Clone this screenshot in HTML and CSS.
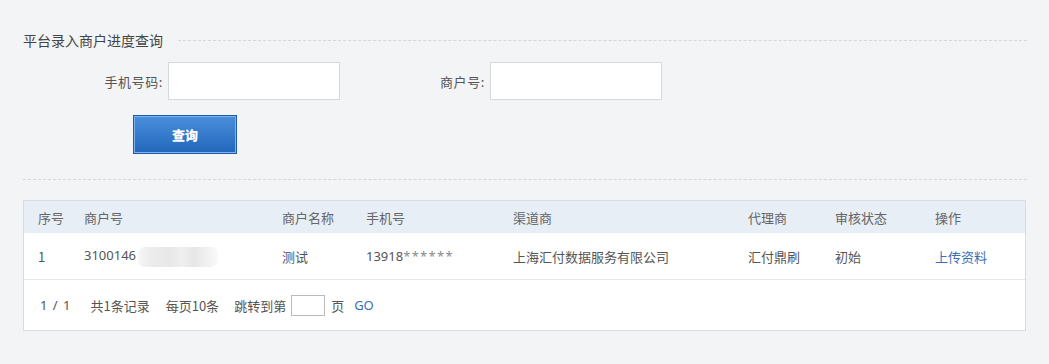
FILE: index.html
```html
<!DOCTYPE html>
<html>
<head>
<meta charset="utf-8">
<link rel="stylesheet" href="styles.css">
</head>
<body>
<div class="page">
  <div class="legend">
    <span class="legend-title">平台录入商户进度查询</span>
    <span class="legend-line"></span>
  </div>
  <div class="form-row">
    <label class="lbl lbl-1">手机号码:</label>
    <input class="field" type="text">
    <label class="lbl lbl-2">商户号:</label>
    <input class="field" type="text">
  </div>
  <div class="btn-row">
    <button class="btn">查询</button>
  </div>
  <div class="divider"></div>
  <div class="grid">
    <table class="tbl">
      <colgroup>
        <col style="width:46px"><col style="width:198px"><col style="width:84px"><col style="width:147px"><col style="width:235px"><col style="width:87px"><col style="width:100px"><col style="width:104px">
      </colgroup>
      <thead>
        <tr><th>序号</th><th>商户号</th><th>商户名称</th><th>手机号</th><th>渠道商</th><th>代理商</th><th>审核状态</th><th>操作</th></tr>
      </thead>
      <tbody>
        <tr>
          <td>1</td>
          <td><span class="num">3100146</span><span class="blur"></span></td>
          <td>测试</td>
          <td class="num">13918<span class="stars">******</span></td>
          <td>上海汇付数据服务有限公司</td>
          <td>汇付鼎刷</td>
          <td>初始</td>
          <td><a class="link">上传资料</a></td>
        </tr>
      </tbody>
    </table>
    <div class="pager">
      <span class="p1">1 / 1</span>
      <span class="p2">共1条记录</span>
      <span class="p3">每页10条</span>
      <span class="p4">跳转到第</span>
      <input class="jump" type="text">
      <span class="p5">页</span>
      <a class="go">GO</a>
    </div>
  </div>
</div>
</body>
</html>
```
FILE: styles.css
```css
html, body {
  margin: 0;
  padding: 0;
  background: #f3f4f6;
}
body {
  font-family: "Noto Sans CJK SC", "Liberation Sans", sans-serif;
  font-size: 13px;
  color: #555;
}
.page {
  padding: 31px 22px 0 23px;
  width: 1004px;
}
.legend {
  display: flex;
  align-items: center;
  height: 18px;
}
.legend-title {
  color: #444;
  font-size: 14px;
  line-height: 18px;
  padding-right: 15px;
}
.legend-line {
  flex: 1;
  border-top: 1px dashed #d3d6db;
}
.form-row {
  display: flex;
  align-items: center;
  margin-top: 13px;
}
.lbl {
  text-align: right;
  padding-right: 5px;
  color: #555;
  letter-spacing: 0.6px;
}
.lbl-1 { width: 140px; }
.lbl-2 { width: 145px; }
.field {
  box-sizing: border-box;
  width: 172px;
  height: 38px;
  border: 1px solid #d6d8db;
  background: #fff;
  margin: 0;
  outline: none;
}
.btn-row {
  padding-left: 110px;
  margin-top: 15px;
}
.btn {
  box-sizing: border-box;
  width: 104px;
  height: 39px;
  border: 1px solid #1f5aa6;
  box-shadow: inset 0 0 0 1px #7fb2ec;
  background: linear-gradient(#4a8fdc, #2266bb);
  color: #fff;
  font-family: "Noto Sans CJK SC", sans-serif;
  font-size: 13px;
  font-weight: 900;
  padding: 0;
  margin: 0;
}
.divider {
  margin-top: 25px;
  border-top: 1px dashed #d3d6db;
}
.grid {
  margin-top: 20px;
  width: 1003px;
  box-sizing: border-box;
  border: 1px solid #d9dcdf;
  background: #fff;
}
.tbl {
  width: 1001px;
  table-layout: fixed;
  border-collapse: collapse;
}
.tbl th {
  background: #e8eef6;
  font-weight: normal;
  text-align: left;
  color: #666;
  height: 32px;
  padding: 0 0 0 14px;
}
.tbl td {
  height: 46px;
  padding: 0 0 0 14px;
  border-bottom: 1px solid #e6e8eb;
  color: #555;
  white-space: nowrap;
}
.num {
  font-family: "Noto Sans", "Liberation Sans", sans-serif;
}
.stars {
  color: #8a8a8a;
  letter-spacing: 1.3px;
}
.blur {
  display: inline-block;
  vertical-align: middle;
  width: 80px;
  height: 20px;
  background: linear-gradient(90deg, #f7f7f7 0%, #ececec 15%, #e8e8e8 40%, #efefef 55%, #e6e6e6 70%, #f3f3f3 90%, #fafafa 100%);
  border-radius: 7px;
  margin-left: 2px;
}
.link {
  color: #3a6fb5;
}
.pager {
  display: flex;
  align-items: center;
  height: 50px;
  padding-left: 16px;
  color: #555;
}
.p1 { font-family: "Noto Sans", "Liberation Sans", sans-serif; word-spacing: 2px; margin-right: 20px; }
.p2 { margin-right: 16px; }
.p3 { margin-right: 15px; }
.p4 { margin-right: 5px; }
.jump {
  box-sizing: border-box;
  width: 34px;
  height: 21px;
  border: 1px solid #bbb;
  margin: 0 6px 0 0;
  padding: 0;
  background: #fff;
}
.p5 { margin-right: 10px; }
.go {
  color: #3a6fb5;
  font-family: "Noto Sans", "Liberation Sans", sans-serif;
}
```
